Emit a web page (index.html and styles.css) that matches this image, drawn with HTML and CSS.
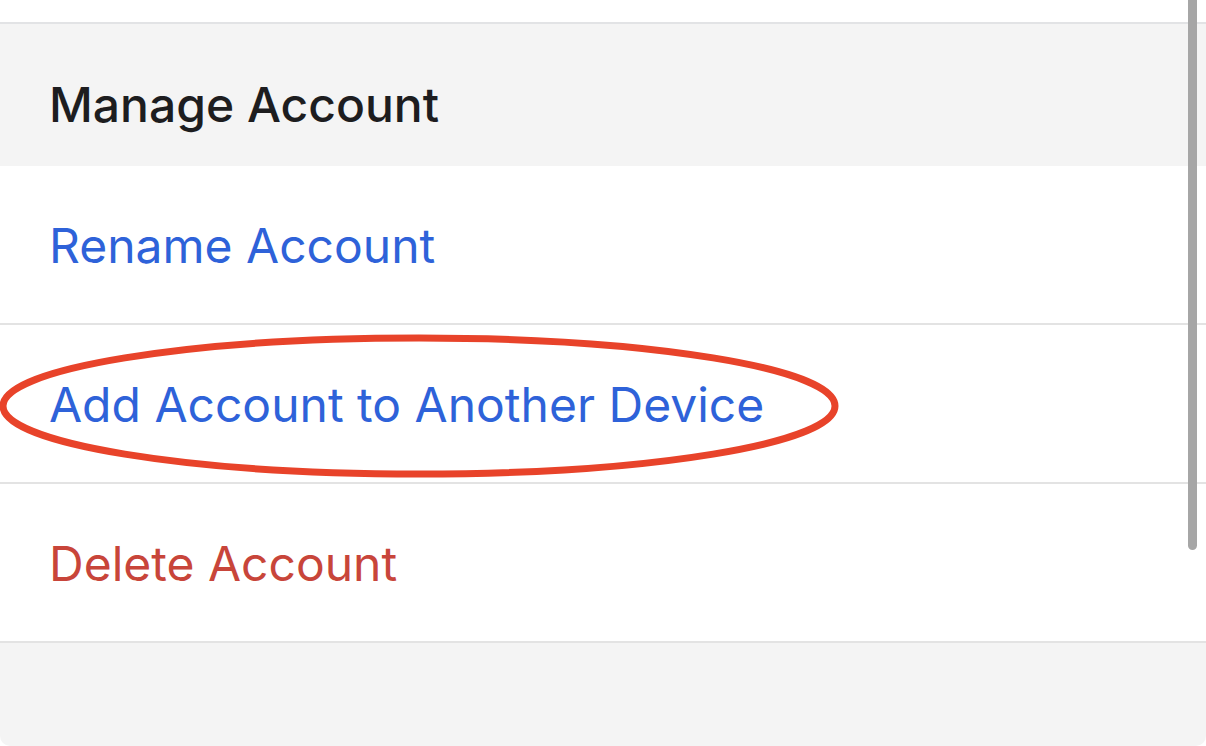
FILE: index.html
```html
<!DOCTYPE html>
<html lang="en">
<head>
<meta charset="UTF-8">
<title>Manage Account</title>
<link rel="stylesheet" href="styles.css">
</head>
<body>
  <div class="panel">
    <div class="top-strip"></div>
    <div class="section-header">
      <h2>Manage Account</h2>
    </div>
    <ul class="actions">
      <li class="action"><a href="#" class="link">Rename Account</a></li>
      <li class="action highlighted">
        <a href="#" class="link">Add Account to Another Device</a>
        <svg class="circle-mark" width="846" height="148" viewBox="0 0 846 148">
          <ellipse cx="421" cy="73" rx="416" ry="68" fill="none" stroke="#e8432a" stroke-width="7"/>
        </svg>
      </li>
      <li class="action"><a href="#" class="link danger">Delete Account</a></li>
    </ul>
    <div class="footer-space"></div>
    <div class="scroll-thumb"></div>
  </div>
</body>
</html>
```

FILE: styles.css
```css
body {
  margin: 0;
  background-color: #fff;
  font-family: Inter, "Noto Sans", sans-serif;
}

.panel {
  position: relative;
  height: 746px;
  display: flex;
  flex-direction: column;
  overflow: hidden;
}

.top-strip {
  height: 22px;
  background-color: #fff;
  border-bottom: 2px solid #e2e3e5;
}

.section-header {
  height: 142px;
  background-color: #f4f4f4;
  padding-left: 49px;
  display: flex;
  align-items: center;
}

.section-header h2 {
  margin: 0;
  padding-top: 18px;
  font-size: 48px;
  font-weight: 500;
  color: #1d1d1f;
}

.actions {
  list-style: none;
  margin: 0;
  padding: 0;
}

.action {
  position: relative;
  height: 157px;
  padding-left: 49px;
  display: flex;
  align-items: center;
  background-color: #fff;
  border-bottom: 2px solid #e3e3e3;
}

.link {
  padding-top: 2px;
  font-size: 48px;
  color: #2e62d9;
  text-decoration: none;
}

.link.danger {
  color: #c8453a;
}

.circle-mark {
  position: absolute;
  left: -2px;
  top: 8px;
}

.footer-space {
  flex: 1;
  background-color: #f4f4f4;
  border-radius: 0 0 10px 10px;
}

.scroll-thumb {
  position: absolute;
  top: -10px;
  right: 9px;
  width: 9px;
  height: 560px;
  background-color: #a6a6a6;
  border-radius: 5px;
}
```
